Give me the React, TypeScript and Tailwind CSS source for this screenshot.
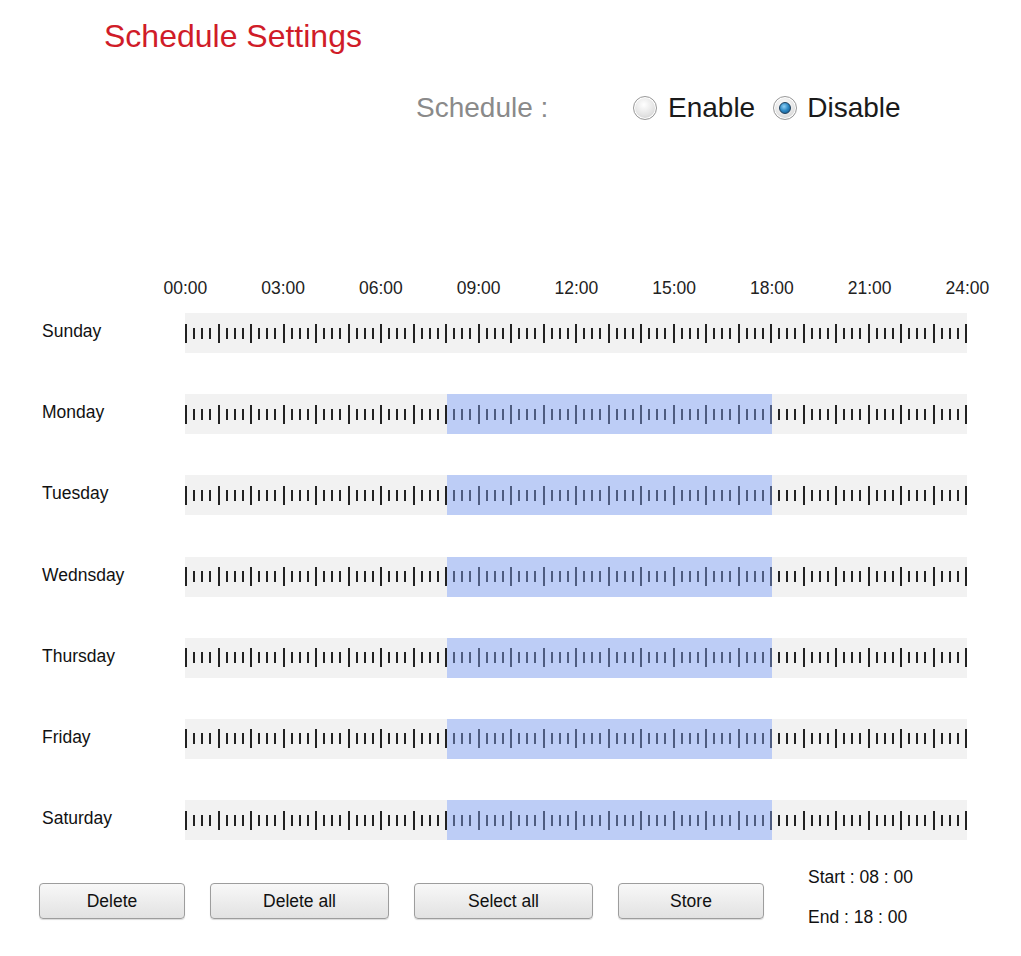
import React from 'react'

const days = ['Sunday', 'Monday', 'Tuesday', 'Wednsday', 'Thursday', 'Friday', 'Saturday']
const hours = ['00:00', '03:00', '06:00', '09:00', '12:00', '15:00', '18:00', '21:00', '24:00']
const buttons = [
  { label: 'Delete', w: 'w-[146px]' },
  { label: 'Delete all', w: 'w-[179px]' },
  { label: 'Select all', w: 'w-[179px]' },
  { label: 'Store', w: 'w-[146px]' },
]

// quarter-hour slots 32..71 => 08:00 - 18:00
const START = 32
const END = 71

function Radio({ checked }: { checked?: boolean }) {
  return (
    <span className="relative flex h-[24px] w-[24px] items-center justify-center rounded-full border border-[#9a9a9a] bg-[radial-gradient(circle_at_45%_35%,#ffffff,#e4e4e4_55%,#c4c4c4)] shadow-[inset_0_0_0_1px_#ffffff]">
      {checked && (
        <span className="h-[12px] w-[12px] rounded-full border border-[#1d3f5c] bg-[radial-gradient(circle_at_40%_35%,#8fd0f5,#2b86c2_50%,#0f4d7e)]" />
      )}
    </span>
  )
}

function Bar({ selected }: { selected: boolean }) {
  return (
    <div className="flex h-10 w-[782px] items-center bg-[#f2f2f2]">
      <span className="h-[19px] w-[2px] shrink-0 bg-[#222]" />
      {Array.from({ length: 96 }, (_, i) => {
        const on = selected && i >= START && i <= END
        const long = (i + 1) % 4 === 0
        return (
          <div
            key={i}
            className={
              'flex h-full flex-1 items-center justify-end ' + (on ? 'bg-[#bdcdf6]' : '')
            }
          >
            <span
              className={
                'w-[2px] ' +
                (long ? 'h-[19px] ' : 'h-[11px] ') +
                (on ? 'bg-[#4e5c80]' : 'bg-[#222]')
              }
            />
          </div>
        )
      })}
    </div>
  )
}

export default function App() {
  return (
    <div className="min-h-[956px] w-[1021px] bg-white font-['Liberation_Sans',Arial,sans-serif] text-[17.5px] text-[#111]">
      <div className="pl-[104px] pt-[20px] text-[32px] leading-[32px] text-[#d01c28]">
        Schedule Settings
      </div>

      <div className="mt-[42px] flex items-center pl-[416px] text-[28px] leading-[28px]">
        <span className="w-[217px] text-[#8a8a8a]">Schedule :</span>
        <Radio />
        <span className="ml-[11px] text-[#1a1a1a]">Enable</span>
        <span className="ml-[18px]">
          <Radio checked />
        </span>
        <span className="ml-[10px] text-[#1a1a1a]">Disable</span>
      </div>

      <div className="ml-[163.5px] mt-[156px] flex w-[825px] justify-between leading-[20px]">
        {hours.map((h) => (
          <span key={h} className="w-[43px] text-center text-[#222]">
            {h}
          </span>
        ))}
      </div>

      <div className="mt-[15px] flex flex-col gap-[41.2px]">
        {days.map((d, i) => (
          <div key={d} className="flex items-center pl-[42px]">
            <span className="mb-[4px] w-[143px] leading-[20px]">{d}</span>
            <Bar selected={i > 0} />
          </div>
        ))}
      </div>

      <div className="mt-[27px] flex items-start pl-[39px]">
        <div className="mt-[16px] flex gap-[25px]">
          {buttons.map((b) => (
            <button
              key={b.label}
              className={
                b.w +
                ' h-[36px] rounded-[4px] border border-[#9d9d9d] bg-gradient-to-b from-[#f8f8f8] to-[#e2e2e2] text-[17.5px] text-[#111] shadow-[0_1px_1px_rgba(0,0,0,0.15)]'
              }
            >
              {b.label}
            </button>
          ))}
        </div>
        <div className="ml-[44px] flex flex-col gap-[20px] leading-[20px]">
          <span>Start : 08 : 00</span>
          <span>End : 18 : 00</span>
        </div>
      </div>
    </div>
  )
}
